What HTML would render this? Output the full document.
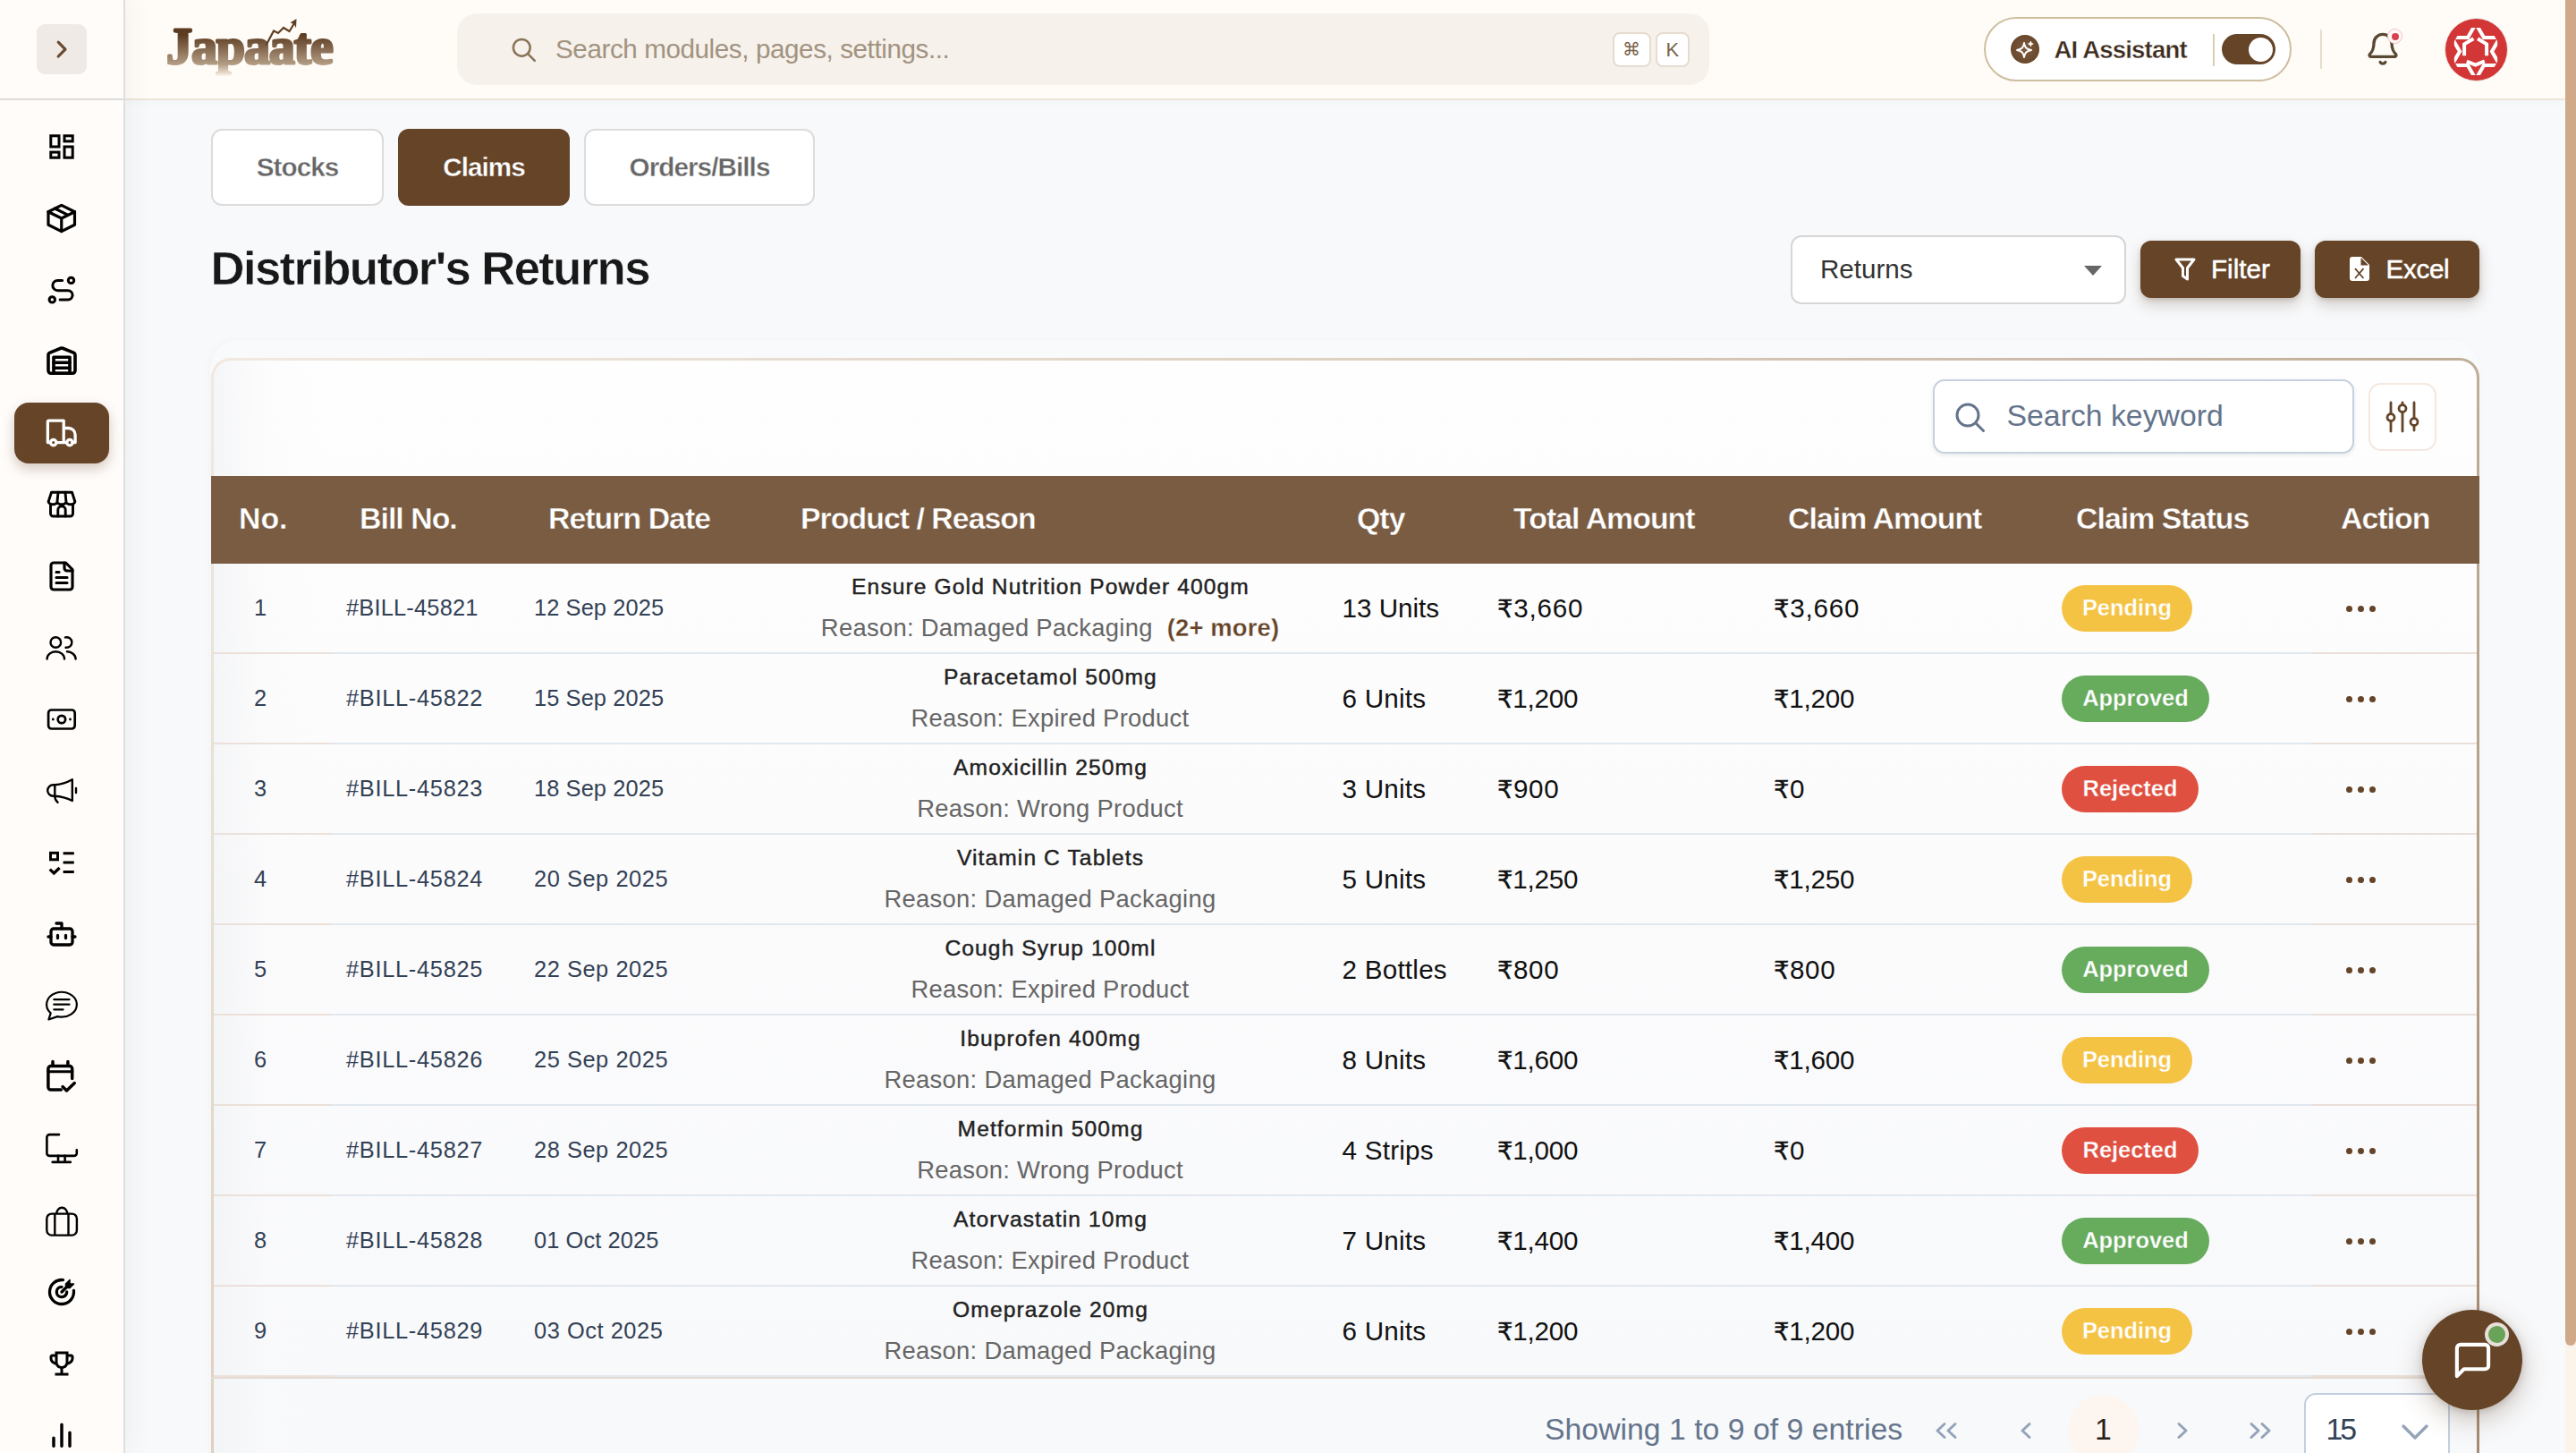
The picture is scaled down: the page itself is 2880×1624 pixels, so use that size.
<!DOCTYPE html>
<html lang="en">
<head>
<meta charset="utf-8">
<title>Japaate - Distributor's Returns</title>
<style>
*{box-sizing:border-box;margin:0;padding:0}
html,body{width:2880px;height:1624px;overflow:hidden}
body{position:relative;background:#f8f9fb;font-family:"Liberation Sans",sans-serif;color:#111;-webkit-font-smoothing:antialiased}
.abs{position:absolute}
.t{position:absolute;white-space:nowrap;line-height:1}
svg{display:block;overflow:visible}

/* ---------- sidebar ---------- */
#sidebar{position:absolute;left:0;top:0;width:140px;height:1624px;background:#fffcfa;border-right:2px solid #dedede;box-shadow:6px 0 26px rgba(60,55,50,.05);z-index:5}
#sidebar .top{position:absolute;left:0;top:0;width:138px;height:112px;border-bottom:2px solid #dcdcdc}
#collapse{position:absolute;left:41px;top:27px;width:56px;height:56px;border-radius:9px;background:#efeae6}
.ic{position:absolute;left:47px;width:44px;height:44px}
.ic svg{width:44px;height:44px}
#active{position:absolute;left:16px;top:450px;width:106px;height:68px;border-radius:16px;background:#654428;box-shadow:0 6px 14px rgba(101,68,40,.28)}

/* ---------- header ---------- */
#header{position:absolute;left:140px;top:0;width:2728px;height:112px;background:#fffcf8;border-bottom:2px solid #efe6da;box-shadow:0 3px 10px rgba(60,50,40,.025);z-index:4}
#gsearch{position:absolute;left:371px;top:15px;width:1400px;height:80px;border-radius:22px;background:#f6f1eb}
.kbd{position:absolute;top:20.5px;height:39.5px;border:2px solid #e6dccf;border-radius:8px;background:#fff;color:#7a6248;font-size:22px;text-align:center;line-height:35.5px}
#aipill{position:absolute;left:2078px;top:19px;width:344px;height:72px;border-radius:36px;border:2px solid #cdbf9f;background:#fff}
#toggle{position:absolute;left:264px;top:17px;width:60px;height:34px;border-radius:17px;background:#654428}
#toggle i{position:absolute;left:30px;top:3.5px;width:27px;height:27px;border-radius:50%;background:#fff}
#avatar{position:absolute;left:2592.5px;top:19.5px;width:71px;height:71px;border-radius:50%;background:#d33636;border:1.5px solid #ebe9e2;overflow:hidden}
#avatar svg{position:absolute;left:1px;top:1px}

/* ---------- scrollbar ---------- */
#sbtrack{position:absolute;left:2868px;top:0;width:12px;height:1624px;background:#fcf3eb;z-index:6}
#sbthumb{position:absolute;left:0;top:-10px;width:12px;height:1514px;border-radius:6px;background:#cfa989}

/* ---------- tabs / title ---------- */
.tab{position:absolute;top:144px;height:86px;border-radius:12px;border:2px solid #dcdcdc;background:#fff;color:#666;font-weight:bold;font-size:29.6px;text-align:center;line-height:82px;letter-spacing:-.9px;-webkit-text-stroke:.35px #fff}
.tab.on{background:#654428;border-color:#654428;color:#fff;-webkit-text-stroke:.35px #654428}
#title{left:235.5px;top:274.2px;font-size:52.6px;font-weight:bold;color:#181818;letter-spacing:-1.6px;-webkit-text-stroke:.5px #f8f9fb}
#sel{position:absolute;left:2002px;top:263px;width:375px;height:77px;border-radius:12px;border:2px solid #d6d6d6;background:#fff}
.btn{position:absolute;top:269px;height:64px;border-radius:12px;background:#654428;color:#fff;box-shadow:0 8px 16px rgba(80,55,30,.22),0 2px 5px rgba(80,55,30,.18)}

/* ---------- card ---------- */
#cardwrap{position:absolute;left:236px;top:400px;width:2536px;height:1300px;border-radius:22px;background:linear-gradient(136deg,#f1e9e0 0%,#ddcfbf 35%,#bfad98 66%,#a68a70 100%);}
#cardouter{position:absolute;left:236px;top:380px;width:2536px;height:1300px;border-radius:30px 30px 0 0;background:rgba(255,255,255,.22);box-shadow:-2px 0 9px rgba(90,100,120,.035)}
#cardwrap:before{content:"";position:absolute;left:3px;top:3px;right:3px;bottom:0;border-radius:19px 19px 0 0;background:linear-gradient(90deg,rgba(242,243,245,.75) 0,rgba(250,250,251,.35) 60px,rgba(255,255,255,0) 120px),linear-gradient(180deg,#fefefe 0,#fdfdfd 240px,#fbfbfc 600px,#f8f9fb 1130px,#f8f9fb 100%)}
#kw{position:absolute;left:1925px;top:24px;width:471px;height:83px;border-radius:13px;border:2px solid #c6d0de;background:#fff;box-shadow:0 2px 5px rgba(100,116,139,.14)}
#colbtn{position:absolute;left:2412px;top:28px;width:76px;height:76px;border-radius:14px;border:2px solid #f4e8df;background:#fff}
#thead{position:absolute;left:0;top:132px;width:2536px;height:98px;background:#7a5c43}
#thead .t{top:30.9px;font-size:33.8px;font-weight:bold;color:#fff;letter-spacing:-.95px;-webkit-text-stroke:.4px #7a5c43}
.row{position:absolute;left:3px;width:2530px;height:101px}
.row:after{content:"";position:absolute;left:0;right:0;bottom:0;height:2px;background:linear-gradient(90deg,#ebe1da 0,#ebe1da 132px,#e2e8f0 133px,#e2e8f0 2345px,#eadfd9 2346px,#eadfd9 100%)}
.row .t{color:#334155}
.c1{left:45px;top:36.5px;font-size:25.4px}
.c2{left:148px;top:36.5px;font-size:25.4px;letter-spacing:.7px}
.c3{left:358px;top:36.5px;font-size:25.4px;letter-spacing:.55px}
.pn{left:626.5px;width:618px;text-align:center;top:14px;font-size:24.6px;color:#222 !important;-webkit-text-stroke:.45px #222;letter-spacing:1.1px}
.pr{left:626px;width:618px;text-align:center;top:58.3px;font-size:27.4px;color:#666 !important;letter-spacing:.28px}
.pr b{color:#654428;margin-left:16px;letter-spacing:.15px;-webkit-text-stroke:.3px #fdfdfd}
.q{left:1261.5px;top:35.4px;font-size:29.6px;color:#111 !important;letter-spacing:.25px}
.a1{left:1435px;top:35.4px;font-size:29.6px;color:#111 !important;letter-spacing:.6px}
.a2{left:1744px;top:35.4px;font-size:29.6px;color:#111 !important;letter-spacing:.6px}
.rs{font-family:"DejaVu Sans","Liberation Sans",sans-serif;font-size:27.4px;-webkit-text-stroke:.4px #111}
.bdg{position:absolute;left:2066px;top:24px;height:52px;border-radius:26px;color:#fff;font-weight:bold;font-size:25.4px;text-align:center;line-height:51px;letter-spacing:0}
.pen{width:146px;background:#f5c344;-webkit-text-stroke:.3px #f5c344}
.app{width:165px;background:#67ab5d;-webkit-text-stroke:.3px #67ab5d}
.rej{width:153px;background:#e05040;-webkit-text-stroke:.3px #e05040}
.dots{position:absolute;left:2384px;top:46.5px;width:34px;height:7px}
.dots i{position:absolute;top:0;width:7px;height:7px;border-radius:50%;background:#654428}
#pager .t{color:#64748b}
#chat{position:absolute;left:2708px;top:1464px;width:112px;height:112px;border-radius:50%;background:#654428;box-shadow:0 10px 30px rgba(80,55,30,.28),0 2px 8px rgba(80,55,30,.2);z-index:7}
#chat i{position:absolute;left:70px;top:14px;width:27px;height:27px;border-radius:50%;background:#68a357;border:4px solid #e7dfd8}
</style>
</head>
<body>

<!-- ================= SIDEBAR ================= -->
<div id="sidebar">
  <div class="top">
    <div id="collapse"><svg class="abs" style="left:0;top:0" width="56" height="56" viewBox="0 0 56 56" fill="none" stroke="#6b4a2e" stroke-width="3.2" stroke-linecap="round" stroke-linejoin="round"><path d="M24.2 20.2 32 28.1 24.2 36"/></svg></div>
  </div>
  <div id="active"></div>
  <div class="ic" style="top:142px"><svg viewBox="0 0 44 44"><g fill="none" stroke="#000" stroke-width="3"><rect x="9.8" y="9.8" width="9.2" height="12.2"/><rect x="25" y="9.8" width="9.2" height="6.1"/><rect x="9.8" y="28.1" width="9.2" height="6.1"/><rect x="25" y="22" width="9.2" height="12.2"/></g></svg></div>
  <div class="ic" style="top:222px"><svg viewBox="0 0 44 44"><g fill="none" stroke="#000" stroke-width="3.2" stroke-linejoin="round" stroke-linecap="round"><path d="M21.75 7.4 36.5 14.7V29.3L21.75 36.6 7 29.3V14.7z"/><path d="M7 14.7 21.75 22 36.5 14.7M21.75 22V36.6M14.4 11.05 29.1 18.35"/></g></svg></div>
  <div class="ic" style="top:302px"><svg viewBox="0 0 44 44"><g fill="none" stroke="#000" stroke-width="3" stroke-linecap="round"><circle cx="32.5" cy="11.4" r="3.2"/><circle cx="11.3" cy="32.9" r="3.2"/><path d="M22.6 11.4H17.5a5.65 5.65 0 0 0 0 11.3H29a5.1 5.1 0 0 1 0 10.2H20.1"/></g></svg></div>
  <div class="ic" style="top:382px"><svg viewBox="0 0 44 44"><g transform="translate(4 2.3) scale(1.5)" fill="none" stroke="#000" stroke-width="2.4" stroke-linecap="round" stroke-linejoin="round"><path d="M22 8.35V20a2 2 0 0 1-2 2H4a2 2 0 0 1-2-2V8.35A2 2 0 0 1 3.26 6.5l8-3.2a2 2 0 0 1 1.48 0l8 3.2A2 2 0 0 1 22 8.35Z"/><path d="M6 18h12M6 14h12"/><rect width="12" height="12" x="6" y="10"/></g></svg></div>
  <div class="ic" style="top:462px"><svg viewBox="0 0 44 44"><g fill="none" stroke="#fff" stroke-width="3.3" stroke-linecap="round" stroke-linejoin="round"><path d="M9.5 32.6H6.35V9.6a1.5 1.5 0 0 1 1.5-1.5H24.2V32.6M15.9 32.6H27.7M34.1 32.6H37.1V24a7.5 7.5 0 0 0-7.5-7.5H24.2"/><circle cx="12.7" cy="32.6" r="3.2"/><circle cx="30.9" cy="32.6" r="3.2"/></g></svg></div>
  <div class="ic" style="top:542px"><svg viewBox="0 0 44 44"><g fill="none" stroke="#000" stroke-width="2.9" stroke-linecap="round" stroke-linejoin="round"><path d="M7.2 18.5 10.5 8.3H33.5L36.8 18.5"/><path d="M7.2 18.5a4.9 3.2 0 0 0 9.8 0a4.9 3.2 0 0 0 9.9 0a4.9 3.2 0 0 0 9.9 0M18 8.3 17 18.5M26 8.3 26.9 18.5"/><path d="M9.5 21.5V32a3 3 0 0 0 3 3H31.5a3 3 0 0 0 3-3V21.5"/><path d="M17.8 35V28a4.2 4.2 0 0 1 8.4 0V35"/></g></svg></div>
  <div class="ic" style="top:622px"><svg viewBox="0 0 44 44"><g transform="translate(4 4) scale(1.5)" fill="none" stroke="#000" stroke-width="2.1" stroke-linecap="round" stroke-linejoin="round"><path d="M15 2H6a2 2 0 0 0-2 2v16a2 2 0 0 0 2 2h12a2 2 0 0 0 2-2V7Z"/><path d="M14 2v4a2 2 0 0 0 2 2h4"/><path d="M10 9H8M16 13H8M16 17H8"/></g></svg></div>
  <div class="ic" style="top:702px"><svg viewBox="0 0 44 44"><g fill="none" stroke="#000" stroke-width="2.4" stroke-linecap="round"><circle cx="15.3" cy="16" r="5.8"/><path d="M5.6 34.5A9.7 8.3 0 0 1 25 34.5"/><path d="M26 10.4A5.8 5.8 0 1 1 26.5 21.7"/><path d="M28 26.3C33 26.3 37.6 30 37.6 34.5"/></g></svg></div>
  <div class="ic" style="top:782px"><svg viewBox="0 0 44 44"><g fill="none" stroke="#000" stroke-width="2.7"><rect x="7.1" y="11.5" width="29.6" height="21" rx="3.5"/><circle cx="21.9" cy="22" r="4.2"/></g><circle cx="12.3" cy="22" r="1.4"/><circle cx="31.5" cy="22" r="1.4"/></svg></div>
  <div class="ic" style="top:862px"><svg viewBox="0 0 44 44"><g fill="none" stroke="#000" stroke-width="2.4" stroke-linecap="round" stroke-linejoin="round"><path d="M33.8 9.3Q24.500 14.600 14.3 15.2H12.5a6.3 6.3 0 0 0 0 12.6h1.8Q24.500 28.400 33.8 33z"/><path d="M14.3 15.2V27.8c0 3 1.5 5.5 3.3 7"/><path d="M38 19v5"/></g></svg></div>
  <div class="ic" style="top:942px"><svg viewBox="0 0 44 44"><g fill="none" stroke="#000" stroke-width="3"><rect x="9.5" y="11.3" width="8" height="7.5"/><path d="M23.6 11.75H35.8M23.6 22H35.8M23.6 32.6H35.8"/><path d="M8.7 29.6l4.6 4.3 6.3-5.95" stroke-width="3.3"/></g></svg></div>
  <div class="ic" style="top:1022px"><svg viewBox="0 0 44 44"><g transform="translate(4 4) scale(1.5)" fill="none" stroke="#000" stroke-width="2.2" stroke-linecap="round" stroke-linejoin="round"><path d="M12 8V4H8"/><rect width="16" height="12" x="4" y="8" rx="2"/><path d="M2 14h2M20 14h2M15 13v2M9 13v2"/></g></svg></div>
  <div class="ic" style="top:1102px"><svg viewBox="0 0 44 44"><g fill="none" stroke="#000" stroke-width="2.2" stroke-linecap="round" stroke-linejoin="round"><path d="M17.3 34.1A16.9 13.9 0 1 0 9.7 30.3L7.4 37.5z"/><path d="M13.3 15.1H30.5M13.3 20.7H30.5M13.3 26.3H23.6"/></g></svg></div>
  <div class="ic" style="top:1182px"><svg viewBox="0 0 44 44"><g fill="none" stroke="#000" stroke-width="3.5" stroke-linecap="round" stroke-linejoin="round"><path d="M12 4.5v4M28.9 4.5v4"/><path d="M33.7 23.5V12.6a3 3 0 0 0-3-3H9.9a3 3 0 0 0-3 3V33.1a3 3 0 0 0 3 3H21.3"/><path d="M6.9 15.8H33.7" stroke-width="3"/><path d="M23 32.6l4.5 4.4 8.8-8.4"/></g></svg></div>
  <div class="ic" style="top:1262px"><svg viewBox="0 0 44 44"><g fill="none" stroke="#000" stroke-width="2.6" stroke-linecap="round" stroke-linejoin="round"><path d="M19 6.1H8.4a3 3 0 0 0-3 3V26.9a3 3 0 0 0 3 3H35.8a3 3 0 0 0 3-3V23.3"/><path d="M18 29.9V36.9M25.6 29.9V36.9M11.7 36.9H31.8"/></g></svg></div>
  <div class="ic" style="top:1342px"><svg viewBox="0 0 44 44"><g fill="none" stroke="#000" stroke-width="2.4"><rect x="5.3" y="14.6" width="33.6" height="24" rx="5.5"/><path d="M16.3 14.6a5.95 6.9 0 0 1 11.9 0"/><path d="M14.3 14.6V38.6M29.5 14.6V38.6"/></g></svg></div>
  <div class="ic" style="top:1422px"><svg viewBox="0 0 44 44"><g transform="translate(4 4) scale(1.5)" fill="none" stroke="#000" stroke-width="2.2" stroke-linecap="round" stroke-linejoin="round"><path d="M12 8.2a3.8 3.8 0 1 0 3.8 3.8"/><path d="M13 3.055a9 9 0 1 0 7.941 7.945"/><path d="M15 6v3h3l3-3h-3v-3z" fill="#000" stroke-width="1"/><path d="M15 9l-3 3"/></g></svg></div>
  <div class="ic" style="top:1502px"><svg viewBox="0 0 44 44"><g transform="translate(4 4) scale(1.5)"><path d="M19 5h-2V3H7v2H5c-1.100 0-2 .9-2 2v1c0 2.550 1.920 4.630 4.390 4.940.63 1.500 1.980 2.630 3.610 2.960V19H7v2h10v-2h-4v-3.100c1.630-.33 2.980-1.460 3.610-2.960C19.080 12.630 21 10.550 21 8V7c0-1.100-.9-2-2-2zM5 8V7h2v3.820C5.840 10.400 5 9.300 5 8zm7 6c-1.650 0-3-1.350-3-3V5h6v6c0 1.650-1.350 3-3 3zm7-6c0 1.300-.84 2.400-2 2.820V7h2v1z" fill="#000"/></g></svg></div>
  <div class="ic" style="top:1582px"><svg viewBox="0 0 44 44"><g transform="translate(4 4.2) scale(1.5)" fill="none" stroke="#000" stroke-width="2.3" stroke-linecap="round" stroke-linejoin="round"><path d="M18 20V10M12 20V4M6 20v-6"/></g></svg></div>
</div>

<!-- ================= HEADER ================= -->
<div id="header">
  <svg class="abs" style="left:30px;top:10px" width="230" height="92" viewBox="0 0 230 92"><defs><linearGradient id="lg" x1="0" y1="18" x2="0" y2="76" gradientUnits="userSpaceOnUse"><stop offset="0" stop-color="#5a3a1f"/><stop offset=".2" stop-color="#5e3e23"/><stop offset=".76" stop-color="#b39d85"/><stop offset=".96" stop-color="#f5e9dc"/></linearGradient></defs><text id="logo_t" x="16" y="60.5" font-family="'Liberation Serif',serif" font-weight="bold" font-size="58" letter-spacing="-1.1" fill="url(#lg)" stroke="url(#lg)" stroke-width="3" stroke-linejoin="round">Japaate</text><path d="M127.5 40.5 136 24.5 141 27 147 21 153.500 25 160 14.500" fill="none" stroke="#5e3e23" stroke-width="2.200" stroke-linejoin="miter"/><path d="M161.500 11 154.500 15.300 159 17.200 161 21.500z" fill="#5e3e23"/></svg>
  <div id="gsearch">
    <svg class="abs" style="left:60px;top:26px" width="30" height="30" viewBox="0 0 30 30" fill="none" stroke="#8a7458" stroke-width="2.500" stroke-linecap="round"><circle cx="12.300" cy="12.300" r="9.400"/><path d="M19.200 19.200 26.800 26.800"/></svg>
    <span class="t" id="gs_t" style="left:110px;top:25.4px;font-size:29.6px;color:#a29380;letter-spacing:-.4px">Search modules, pages, settings...</span>
    <div class="kbd" style="left:1291.5px;width:43px;font-family:'DejaVu Sans',sans-serif;font-size:20px">⌘</div>
    <div class="kbd" style="left:1339.5px;width:38.5px">K</div>
  </div>
  <div id="aipill">
    <div class="abs" style="left:28px;top:18px;width:32px;height:32px;border-radius:50%;background:radial-gradient(circle at 50% 50%,#7e5d41 0,#6d4c30 55%,#5f3f22 100%)"><svg class="abs" style="left:0;top:0" width="32" height="32" viewBox="0 0 32 32"><path d="M15 9C15.800 14 17.500 16 23 17C17.500 18 15.800 20 15 25C14.200 20 12.500 18 7 17C12.500 16 14.200 14 15 9Z" fill="none" stroke="#fff" stroke-width="1.900" stroke-linejoin="round"/><path d="M22.300 7Q22.700 9.600 25.300 10Q22.700 10.400 22.300 13Q21.900 10.400 19.300 10Q21.900 9.600 22.300 7Z" fill="#fff" stroke="#fff" stroke-width=".6" stroke-linejoin="round"/></svg></div>
    <span class="t" id="ai_t" style="left:76.5px;top:21.2px;font-size:27.5px;font-weight:bold;color:#3d2c1c;letter-spacing:-.8px;-webkit-text-stroke:.35px #fff">AI Assistant</span>
    <div class="abs" style="left:254px;top:17px;width:2px;height:36px;background:#d9ccb2"></div>
    <div id="toggle"><i></i></div>
  </div>
  <div class="abs" style="left:2454px;top:33px;width:2px;height:44px;background:#e6dccb"></div>
  <svg class="abs" style="left:2504px;top:35px" width="40" height="40" viewBox="0 0 24 24" fill="none" stroke="#594832" stroke-width="2" stroke-linecap="round" stroke-linejoin="round"><path d="M10.268 21a2 2 0 0 0 3.464 0" transform="translate(0 -0.3)"/><path d="M3.262 15.326A1 1 0 0 0 4 17h16a1 1 0 0 0 .74-1.673C19.410 13.956 18 12.499 18 8A6 6 0 0 0 6 8c0 4.499-1.411 5.956-2.738 7.326"/></svg><div class="abs" style="left:2529.3px;top:32.4px;width:17px;height:17px;border-radius:50%;background:#fffaf6;border:1px solid #f3bcbc"></div><div class="abs" style="left:2533.8px;top:36.9px;width:8px;height:8px;border-radius:50%;background:#d9414e"></div>
  <div id="avatar"><svg width="66" height="66" viewBox="0 0 66 66"><defs><clipPath id="hx"><polygon points="48.36,8.90 63.72,35.50 48.36,62.10 17.64,62.10 2.28,35.50 17.64,8.90"/></clipPath><clipPath id="hr"><rect x="8.8" y="0" width="48.4" height="66"/></clipPath></defs><g clip-path="url(#hr)"><g clip-path="url(#hx)"><polygon points="33.00,4.40 41.98,19.95 59.93,19.95 50.96,35.50 59.93,51.05 41.98,51.05 33.00,66.60 24.02,51.05 6.07,51.05 15.04,35.50 6.07,19.95 24.02,19.95" fill="none" stroke="#fff" stroke-width="4.1" stroke-linejoin="miter"/></g></g><path d="M30.4 21.2 20.1 27.4V40.3M35.1 21.2 45.1 27.4V40.3M22.8 46.6 32.6 50.7 42.8 46.4" fill="none" stroke="#fff" stroke-width="4" stroke-linejoin="miter"/></svg></div>
</div>

<div id="sbtrack"><div id="sbthumb"></div></div>

<!-- ================= TABS + TITLE ================= -->
<div class="tab" style="left:236px;width:193px"><span id="tb1">Stocks</span></div>
<div class="tab on" style="left:445px;width:192px"><span id="tb2">Claims</span></div>
<div class="tab" style="left:653px;width:258px"><span id="tb3">Orders/Bills</span></div>

<div class="t" id="title">Distributor's Returns</div>

<div id="sel">
  <span class="t" id="sel_t" style="left:31px;top:21.4px;font-size:29.6px;color:#333">Returns</span>
  <svg class="abs" style="left:326px;top:32px" width="20" height="11" viewBox="0 0 20 11"><path d="M0 0h20L10 11z" fill="#666"/></svg>
</div>
<div class="btn" style="left:2393px;width:179px">
  <svg class="abs" style="left:38px;top:19px" width="24" height="26" viewBox="0 0 24 26" fill="none" stroke="#fff" stroke-width="3" stroke-linejoin="round" stroke-linecap="round"><path d="M2 2h20l-7.500 9.500V24l-5-3.500V11.500z"/></svg>
  <span class="t" id="bt1" style="left:79px;top:17.4px;font-size:29.6px;-webkit-text-stroke:.5px #fff">Filter</span>
</div>
<div class="btn" style="left:2588px;width:184px">
  <svg class="abs" style="left:39px;top:18px" width="22" height="27" viewBox="0 0 22 27"><path d="M3 0h10l9 9v15a3 3 0 0 1-3 3H3a3 3 0 0 1-3-3V3a3 3 0 0 1 3-3z" fill="#fff"/><path d="M12.500 1v8.500H21z" fill="#654428"/><path d="M6 13.200l9.400 10.800M15.400 13.200l-9.400 10.800" stroke="#654428" stroke-width="1.800" fill="none"/></svg>
  <span class="t" id="bt2" style="left:79.5px;top:17.4px;font-size:29.6px;letter-spacing:-.3px;-webkit-text-stroke:.5px #fff">Excel</span>
</div>

<!-- ================= CARD ================= -->
<div id="cardouter"></div>
<div id="cardwrap">
  <div id="kw">
    <svg class="abs" style="left:23px;top:24px" width="33" height="33" viewBox="0 0 33 33" fill="none" stroke="#64748b" stroke-width="3" stroke-linecap="round"><circle cx="14" cy="14" r="12"/><path d="M23 23l8.500 8.500"/></svg>
    <span class="t" id="kw_t" style="left:80.5px;top:22.4px;font-size:33.8px;color:#64748b">Search keyword</span>
  </div>
  <div id="colbtn">
    <svg class="abs" style="left:17px;top:19px" width="38" height="34" viewBox="0 0 38 34" fill="none" stroke="#654428" stroke-width="2.800" stroke-linecap="round"><path d="M6 1v12M6 22v11M19 1v2M19 12v21M32 1v17M32 27v5"/><circle cx="6" cy="17.500" r="4"/><circle cx="19" cy="7.500" r="4"/><circle cx="32" cy="22.500" r="4"/></svg>
  </div>
  <div id="thead">
    <span class="t" id="h1" style="left:31px;letter-spacing:0">No.</span>
    <span class="t" id="h2" style="left:166px">Bill No.</span>
    <span class="t" id="h3" style="left:377px">Return Date</span>
    <span class="t" id="h4" style="left:659px">Product / Reason</span>
    <span class="t" id="h5" style="left:1281px">Qty</span>
    <span class="t" id="h6" style="left:1456px">Total Amount</span>
    <span class="t" id="h7" style="left:1763px">Claim Amount</span>
    <span class="t" id="h8" style="left:2085px">Claim Status</span>
    <span class="t" id="h9" style="left:2381px">Action</span>
  </div>
  <div class="row" style="top:230px">
    <span class="t c1">1</span><span class="t c2" style="letter-spacing:.2px">#BILL-45821</span><span class="t c3" style="letter-spacing:.1px">12 Sep 2025</span>
    <span class="t pn">Ensure Gold Nutrition Powder 400gm</span><span class="t pr">Reason: Damaged Packaging<b>(2+ more)</b></span>
    <span class="t q" style="letter-spacing:0">13 Units</span><span class="t a1" style="letter-spacing:.8px"><span class="rs">₹</span>3,660</span><span class="t a2" style="letter-spacing:.8px"><span class="rs">₹</span>3,660</span>
    <div class="bdg pen">Pending</div><div class="dots"><i style="left:0"></i><i style="left:13px"></i><i style="left:26px"></i></div>
  </div>
  <div class="row" style="top:331px">
    <span class="t c1">2</span><span class="t c2">#BILL-45822</span><span class="t c3" style="letter-spacing:.1px">15 Sep 2025</span>
    <span class="t pn">Paracetamol 500mg</span><span class="t pr">Reason: Expired Product</span>
    <span class="t q">6 Units</span><span class="t a1" style="letter-spacing:-.2px"><span class="rs">₹</span>1,200</span><span class="t a2" style="letter-spacing:-.2px"><span class="rs">₹</span>1,200</span>
    <div class="bdg app">Approved</div><div class="dots"><i style="left:0"></i><i style="left:13px"></i><i style="left:26px"></i></div>
  </div>
  <div class="row" style="top:432px">
    <span class="t c1">3</span><span class="t c2">#BILL-45823</span><span class="t c3" style="letter-spacing:.1px">18 Sep 2025</span>
    <span class="t pn">Amoxicillin 250mg</span><span class="t pr">Reason: Wrong Product</span>
    <span class="t q">3 Units</span><span class="t a1"><span class="rs">₹</span>900</span><span class="t a2"><span class="rs">₹</span>0</span>
    <div class="bdg rej">Rejected</div><div class="dots"><i style="left:0"></i><i style="left:13px"></i><i style="left:26px"></i></div>
  </div>
  <div class="row" style="top:533px">
    <span class="t c1">4</span><span class="t c2">#BILL-45824</span><span class="t c3">20 Sep 2025</span>
    <span class="t pn">Vitamin C Tablets</span><span class="t pr">Reason: Damaged Packaging</span>
    <span class="t q">5 Units</span><span class="t a1" style="letter-spacing:-.2px"><span class="rs">₹</span>1,250</span><span class="t a2" style="letter-spacing:-.2px"><span class="rs">₹</span>1,250</span>
    <div class="bdg pen">Pending</div><div class="dots"><i style="left:0"></i><i style="left:13px"></i><i style="left:26px"></i></div>
  </div>
  <div class="row" style="top:634px">
    <span class="t c1">5</span><span class="t c2">#BILL-45825</span><span class="t c3">22 Sep 2025</span>
    <span class="t pn">Cough Syrup 100ml</span><span class="t pr">Reason: Expired Product</span>
    <span class="t q">2 Bottles</span><span class="t a1"><span class="rs">₹</span>800</span><span class="t a2"><span class="rs">₹</span>800</span>
    <div class="bdg app">Approved</div><div class="dots"><i style="left:0"></i><i style="left:13px"></i><i style="left:26px"></i></div>
  </div>
  <div class="row" style="top:735px">
    <span class="t c1">6</span><span class="t c2">#BILL-45826</span><span class="t c3">25 Sep 2025</span>
    <span class="t pn">Ibuprofen 400mg</span><span class="t pr">Reason: Damaged Packaging</span>
    <span class="t q">8 Units</span><span class="t a1" style="letter-spacing:-.2px"><span class="rs">₹</span>1,600</span><span class="t a2" style="letter-spacing:-.2px"><span class="rs">₹</span>1,600</span>
    <div class="bdg pen">Pending</div><div class="dots"><i style="left:0"></i><i style="left:13px"></i><i style="left:26px"></i></div>
  </div>
  <div class="row" style="top:836px">
    <span class="t c1">7</span><span class="t c2">#BILL-45827</span><span class="t c3">28 Sep 2025</span>
    <span class="t pn">Metformin 500mg</span><span class="t pr">Reason: Wrong Product</span>
    <span class="t q">4 Strips</span><span class="t a1" style="letter-spacing:-.2px"><span class="rs">₹</span>1,000</span><span class="t a2"><span class="rs">₹</span>0</span>
    <div class="bdg rej">Rejected</div><div class="dots"><i style="left:0"></i><i style="left:13px"></i><i style="left:26px"></i></div>
  </div>
  <div class="row" style="top:937px">
    <span class="t c1">8</span><span class="t c2">#BILL-45828</span><span class="t c3" style="letter-spacing:.1px">01 Oct 2025</span>
    <span class="t pn">Atorvastatin 10mg</span><span class="t pr">Reason: Expired Product</span>
    <span class="t q">7 Units</span><span class="t a1" style="letter-spacing:-.2px"><span class="rs">₹</span>1,400</span><span class="t a2" style="letter-spacing:-.2px"><span class="rs">₹</span>1,400</span>
    <div class="bdg app">Approved</div><div class="dots"><i style="left:0"></i><i style="left:13px"></i><i style="left:26px"></i></div>
  </div>
  <div class="row" style="top:1038px">
    <span class="t c1">9</span><span class="t c2">#BILL-45829</span><span class="t c3">03 Oct 2025</span>
    <span class="t pn">Omeprazole 20mg</span><span class="t pr">Reason: Damaged Packaging</span>
    <span class="t q">6 Units</span><span class="t a1" style="letter-spacing:-.2px"><span class="rs">₹</span>1,200</span><span class="t a2" style="letter-spacing:-.2px"><span class="rs">₹</span>1,200</span>
    <div class="bdg pen">Pending</div><div class="dots"><i style="left:0"></i><i style="left:13px"></i><i style="left:26px"></i></div>
  </div>
  <div id="pager">
    <div class="abs" style="left:0;top:1139px;width:2536px;height:2px;background:#e4dbd2"></div>
    <span class="t" id="pg_t" style="left:1491px;top:1181.4px;font-size:33.8px">Showing 1 to 9 of 9 entries</span>
    <svg class="abs" style="left:1928px;top:1190px" width="24" height="18" viewBox="0 0 24 18" fill="none" stroke="#94a3b8" stroke-width="3" stroke-linecap="round" stroke-linejoin="round"><path d="M10 1.500 2 9l8 7.500M22 1.500 14 9l8 7.500"/></svg>
    <svg class="abs" style="left:2023px;top:1190px" width="12" height="18" viewBox="0 0 12 18" fill="none" stroke="#94a3b8" stroke-width="3" stroke-linecap="round" stroke-linejoin="round"><path d="M10 1.500 2 9l8 7.500"/></svg>
    <div class="abs" style="left:2076px;top:1159px;width:80px;height:80px;border-radius:50%;background:#fdf6f0"></div>
    <span class="t" id="pg1" style="left:2106px;top:1181.4px;font-size:33.8px;color:#2b2118">1</span>
    <svg class="abs" style="left:2198px;top:1190px" width="12" height="18" viewBox="0 0 12 18" fill="none" stroke="#94a3b8" stroke-width="3" stroke-linecap="round" stroke-linejoin="round"><path d="M2 1.500 10 9l-8 7.500"/></svg>
    <svg class="abs" style="left:2279px;top:1190px" width="24" height="18" viewBox="0 0 24 18" fill="none" stroke="#94a3b8" stroke-width="3" stroke-linecap="round" stroke-linejoin="round"><path d="M2 1.500 10 9l-8 7.500M14 1.500 22 9l-8 7.500"/></svg>
    <div class="abs" style="left:2340px;top:1157px;width:163px;height:84px;border-radius:13px;border:2px solid #c3cede;background:#fff">
      <span class="t" id="pg15" style="left:22.5px;top:22.4px;font-size:33.8px;color:#334155;letter-spacing:-3px">15</span>
      <svg class="abs" style="left:107px;top:33px" width="30" height="18" viewBox="0 0 30 18" fill="none" stroke="#94a3b8" stroke-width="3.400" stroke-linecap="round" stroke-linejoin="round"><path d="M2 2l13 13L28 2"/></svg>
    </div>
  </div>
</div>

<div id="chat"><svg class="abs" style="left:32.5px;top:32.5px" width="47" height="47" viewBox="0 0 24 24" fill="none" stroke="#fff" stroke-width="2.1" stroke-linecap="round" stroke-linejoin="round"><path d="M21 15a2 2 0 0 1-2 2H7l-4 4V5a2 2 0 0 1 2-2h14a2 2 0 0 1 2 2z"/></svg><i></i></div>

</body>
</html>
